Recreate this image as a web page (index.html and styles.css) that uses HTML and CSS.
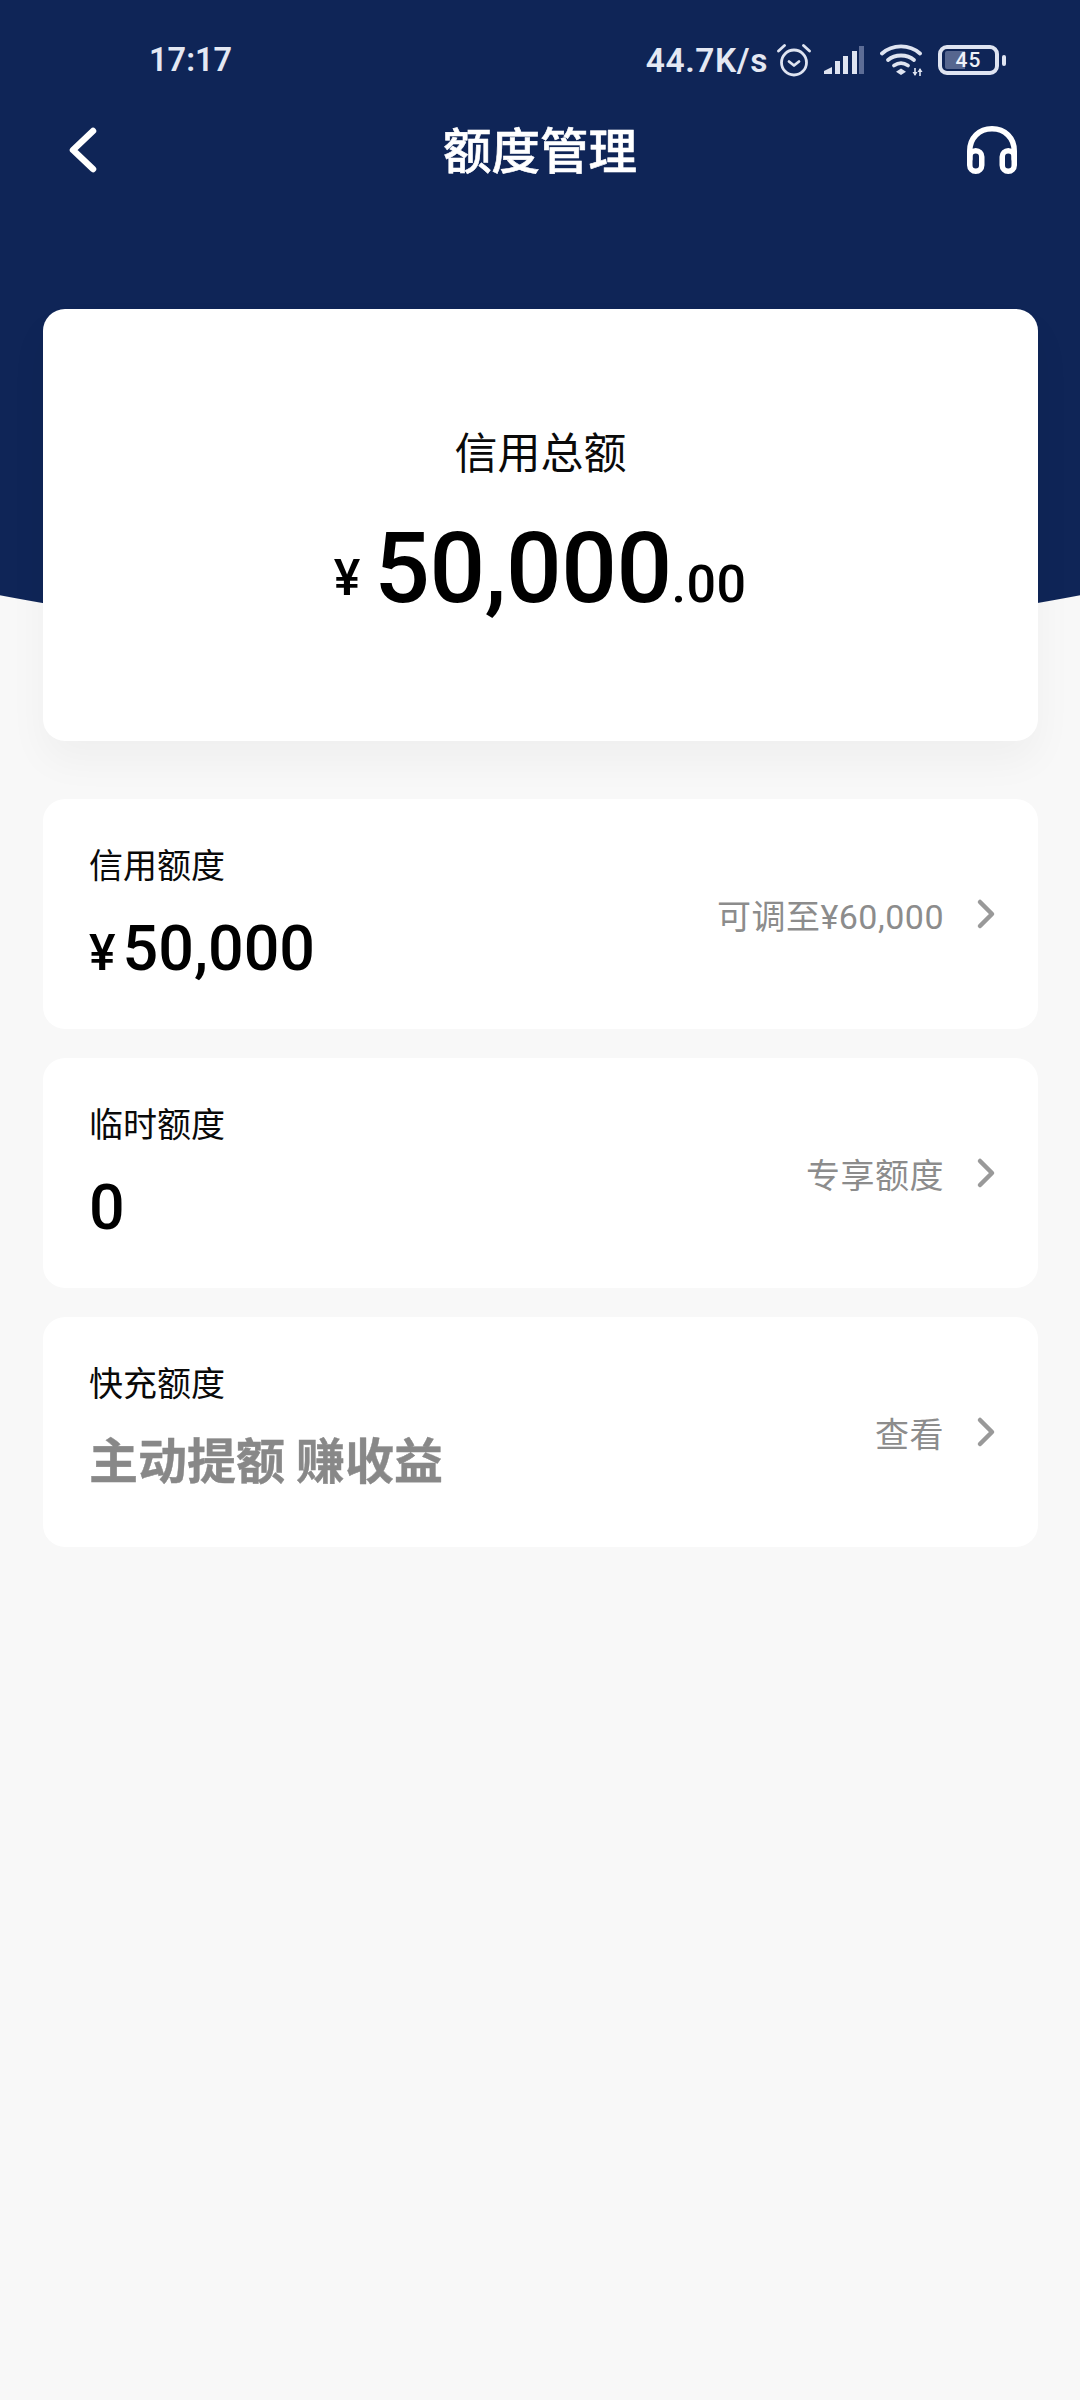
FILE: index.html
```html
<!DOCTYPE html>
<html lang="zh-CN">
<head>
<meta charset="utf-8">
<title>额度管理</title>
<link rel="stylesheet" href="styles.css">
</head>
<body>
<div class="page">
  <div class="status">
    <span class="time">17:17</span>
    <div class="status-right">
      <span class="speed">44.7K/s</span>
      <svg class="i-alarm" viewBox="0 0 34 34" fill="none" stroke="#dfe4f1" stroke-width="2.800" stroke-linecap="round" stroke-linejoin="round"><circle cx="17" cy="19.500" r="12.500"/><path d="M12 18.500l5 4 5-4"/><path d="M1.500 8 7.500 2.500M32.500 8 26.500 2.500"/></svg>
      <svg class="i-signal" viewBox="0 0 40 28"><path fill="#dfe4f1" d="M0 28v-3l8-4v7zM11 28V15h5v13zM19 28V10h5v18zM28 28V5h5v23z"/><path fill="#5d6d96" d="M35 28V0h5v28z"/></svg>
      <svg class="i-wifi" viewBox="0 0 43 32" fill="none" stroke="#dfe4f1" stroke-width="3.800" stroke-linecap="round"><path d="M2 9.500C12.500 0 29.500 0 40 9.500"/><path d="M8 16C15 10 27 10 34 16"/><path d="M14 21.500c4.500-3 9.500-3 14 0"/><path fill="#dfe4f1" stroke="none" d="M21 24.500l5 3.200-5 3.300-5-3.300z"/><path stroke-width="1.600" stroke-linecap="butt" d="M35 24v7M40 25v7"/><path fill="#dfe4f1" stroke="none" d="M32.500 28h5L35 32zM37.500 28h5L40 24z"/></svg>
      <div class="battery"><div class="battery-inner"><span class="battery-num">45</span></div></div>
      <span class="battery-tip"></span>
    </div>
  </div>
  <header class="nav">
    <svg class="i-back" viewBox="0 0 30 46" fill="none" stroke="#fff" stroke-width="6.500" stroke-linecap="round" stroke-linejoin="round"><path d="M25 4 5 23l20 19"/></svg>
    <h1 class="title">额度管理</h1>
    <svg class="i-head" viewBox="0 0 50 48" fill="none" stroke="#fff" stroke-width="5.500" stroke-linecap="round"><path d="M2.750 33V25C2.750 12 12 2.750 25 2.750S47.250 12 47.250 25V33"/><rect x="2.750" y="24.750" width="12" height="20.500" rx="6"/><rect x="35.250" y="24.750" width="12" height="20.500" rx="6"/></svg>
  </header>
  <main class="content">
    <section class="total">
      <div class="total-label">信用总额</div>
      <div class="total-amount"><span class="total-cur">¥</span><span class="total-int">50,000</span><span class="total-dec">.00</span></div>
    </section>
    <section class="row">
      <div class="row-main">
        <div class="row-label">信用额度</div>
        <div class="row-value"><span class="row-cur">¥</span>50,000</div>
      </div>
      <div class="row-side"><span class="row-note">可调至¥60,000</span><svg class="i-chev" viewBox="0 0 22 34" fill="none" stroke="#999" stroke-width="4.500" stroke-linecap="round" stroke-linejoin="round"><path d="M6 5l12 12L6 29"/></svg></div>
    </section>
    <section class="row">
      <div class="row-main">
        <div class="row-label">临时额度</div>
        <div class="row-value">0</div>
      </div>
      <div class="row-side"><span class="row-note">专享额度</span><svg class="i-chev" viewBox="0 0 22 34" fill="none" stroke="#999" stroke-width="4.500" stroke-linecap="round" stroke-linejoin="round"><path d="M6 5l12 12L6 29"/></svg></div>
    </section>
    <section class="row">
      <div class="row-main">
        <div class="row-label">快充额度</div>
        <div class="row-promo">主动提额 赚收益</div>
      </div>
      <div class="row-side"><span class="row-note">查看</span><svg class="i-chev" viewBox="0 0 22 34" fill="none" stroke="#999" stroke-width="4.500" stroke-linecap="round" stroke-linejoin="round"><path d="M6 5l12 12L6 29"/></svg></div>
    </section>
  </main>
</div>
</body>
</html>
```
FILE: styles.css
```css
* { box-sizing: border-box; }
html, body { margin: 0; padding: 0; }
body { font-family: Roboto, "Noto Sans CJK SC", sans-serif; }
.page {
  width: 1080px;
  height: 2400px;
  overflow: hidden;
  background-color: #f8f8f8;
  background-image: radial-gradient(circle 2900px at 540px -2254px, #0f2557 0, #0f2557 2899.5px, #f8f8f8 2900.5px);
}
.status {
  height: 120px;
  display: flex;
  justify-content: space-between;
  align-items: center;
  padding: 0 74px 0 149px;
  color: #e4e8f3;
}
.time { font-size: 32.5px; font-weight: 600; }
.status-right { display: flex; align-items: center; }
.speed { font-size: 33.5px; font-weight: 600; letter-spacing: .6px; margin-right: 9px; }
.i-alarm { width: 34px; height: 34px; margin-right: 13px; }
.i-signal { width: 40px; height: 28px; margin-right: 16px; }
.i-wifi { width: 43px; height: 32px; margin-right: 15px; }
.battery {
  width: 61px; height: 30px; border: 4px solid #dfe4f1; border-radius: 9px;
  padding: 2px 3px;
  display: flex;
}
.battery-inner {
  flex: 1;
  border-radius: 2px;
  display: flex; align-items: center; justify-content: center;
  background: linear-gradient(90deg, #56668f 0 42%, transparent 42%);
}
.battery-num { font-size: 21px; font-weight: 500; line-height: 1; color: #eef1f8; letter-spacing: 1px; }
.battery-tip { width: 4px; height: 11px; background: #dfe4f1; border-radius: 2px; margin-left: 3px; }
.nav {
  height: 64px;
  margin-top: -2px;
  display: grid;
  grid-template-columns: 1fr auto 1fr;
  align-items: center;
  padding: 0 63px;
}
.i-back { width: 30px; height: 46px; margin-left: 5px; }
.title {
  margin: 0; padding-bottom: 3px;
  font-size: 48.5px; font-weight: 500; color: #fff; line-height: 61px;
  -webkit-text-stroke: .6px #fff;
  font-family: "Noto Sans CJK SC", sans-serif;
}
.i-head { width: 50px; height: 48px; justify-self: end; }
.content { padding: 127px 42px 0 43px; display: flex; flex-direction: column; }
.total {
  height: 432px; background: #fff; border-radius: 22px;
  box-shadow: 0 20px 40px rgba(0, 0, 0, .04);
  padding-top: 113px;
  margin-bottom: 58px;
  text-align: center;
}
.total-label { font-family: "Noto Sans CJK SC", sans-serif; font-size: 43px; line-height: 56px; color: #0a0a0a; }
.total-amount { margin-top: 31px; padding-right: 1px; line-height: 120px; color: #000; white-space: nowrap; }
.total-cur { font-size: 50px; font-weight: 500; margin-right: 14px; vertical-align: 7px; }
.total-int { font-size: 98px; font-weight: 500; letter-spacing: -.5px; }
.total-dec { font-size: 52px; font-weight: 500; letter-spacing: .4px; }
.row {
  height: 230px; background: #fff; border-radius: 22px; margin-bottom: 29px;
  display: flex; align-items: center; justify-content: space-between;
  padding: 0 42px 0 46px;
}
.row-main { align-self: flex-start; padding-top: 42px; display: flex; flex-direction: column; }
.row-label { font-family: "Noto Sans CJK SC", sans-serif; font-size: 34px; line-height: 46px; color: #0a0a0a; }
.row-value { font-size: 62.8px; font-weight: 500; line-height: 80px; margin-top: 22px; color: #000; display: flex; align-items: baseline; }
.row-cur { font-size: 50px; margin-right: 7px; }
.row-promo {
  font-family: "Noto Sans CJK SC", sans-serif; font-size: 49px; font-weight: 700;
  -webkit-text-stroke: .4px #888;
  line-height: 70px; margin-top: 18px; color: #888; white-space: nowrap;
}
.row-side { display: flex; align-items: center; }
.row-note { font-size: 34px; letter-spacing: .5px; color: #8c8c8c; margin-right: 30px; }
.i-chev { width: 22px; height: 34px; }
```
